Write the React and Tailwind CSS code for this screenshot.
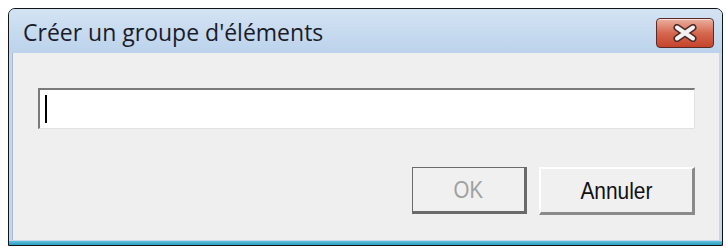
export default function App() {
  return (
    <div className="w-[726px] h-[248px] bg-white pt-[8px] pl-[8px]">
      <div className="w-[715px] h-[238px] flex flex-col border border-[#101418] rounded-t-[7px] bg-[#c2d8ee] overflow-hidden">
        <div className="h-[44px] flex items-center justify-between bg-gradient-to-b from-[#d3e3f3] to-[#bcd3ec] pl-[14px] pr-[8px]">
          <span className="text-[23px] text-[#1b1b2a] font-['Open_Sans','Noto_Sans',sans-serif] leading-none mt-[2px]">Créer un groupe d'éléments</span>
          <div className="w-[58px] h-[30px] mt-[4px] rounded-[4px] border border-[#5a2a24] bg-gradient-to-b from-[#eab0a0] via-[#d5674f] to-[#c4442b] flex items-center justify-center shadow-[inset_0_1px_0_rgba(255,255,255,0.6)]">
            <svg width="30" height="18" viewBox="0 0 30 18">
              <path d="M7 3.5 L23 14.5 M23 3.5 L7 14.5" stroke="#4a2a28" strokeWidth="7" strokeLinecap="round" />
              <path d="M7 3.5 L23 14.5 M23 3.5 L7 14.5" stroke="#f4f1f1" strokeWidth="4" strokeLinecap="round" />
            </svg>
          </div>
        </div>
        <div className="flex-1 flex px-[3px] pb-[1px]">
          <div className="flex-1 flex flex-col bg-[#efefef] border-l border-[#a9b8cc]">
            <div className="mt-[35px] ml-[25px] w-[657px] h-[41px] bg-white border-t-2 border-l-2 border-[#7a7a7a] border-r border-b border-r-[#e3e3e3] border-b-[#e3e3e3] flex items-center pl-[5px]">
              <div className="w-[2px] h-[28px] bg-black"></div>
            </div>
            <div className="mt-[38px] ml-[399px] flex gap-[12px]">
              <div className="w-[115px] h-[47px] bg-[#f0f0f0] border border-[#6a6a6a] border-r-[3px] border-b-[3px] flex items-center justify-center">
                <span className="text-[24px] text-[#a0a0a0] font-['Liberation_Sans',sans-serif] scale-x-[0.85] leading-none">OK</span>
              </div>
              <div className="w-[156px] h-[48px] bg-[#f0f0f0] border-t-2 border-l-2 border-white border-r-[3px] border-b-[3px] border-r-[#8a8a8a] border-b-[#8a8a8a] flex items-center justify-center">
                <span className="text-[24px] text-[#111] font-['Liberation_Sans',sans-serif] scale-x-[0.87] leading-none">Annuler</span>
              </div>
            </div>
          </div>
        </div>
        <div className="h-[4px] bg-gradient-to-b from-[#5fc1dc] to-[#2a9cc0]"></div>
      </div>
    </div>
  );
}
